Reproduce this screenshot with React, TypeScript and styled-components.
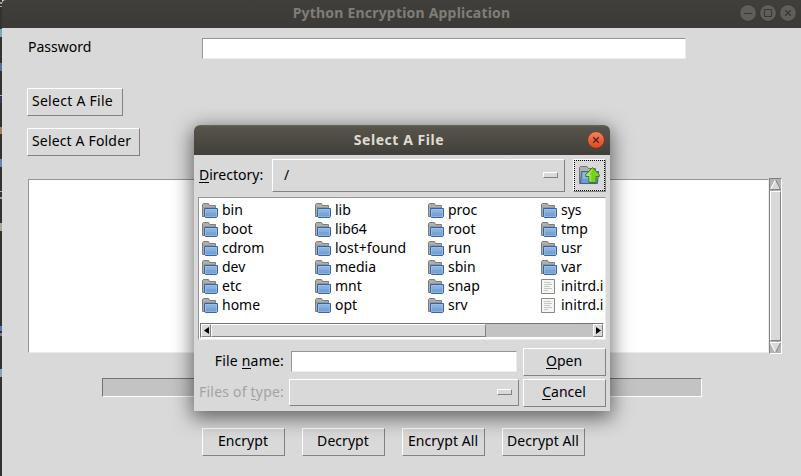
import React from "react";
import styled, { createGlobalStyle } from "styled-components";

const Global = createGlobalStyle`
  * { box-sizing: border-box; }
  html, body { margin: 0; padding: 0; background: #33322f; overflow: hidden; }
  body { font-family: "Noto Sans", sans-serif; font-size: 14px; line-height: 20px; color: #000; }
  button, input { font: inherit; color: inherit; margin: 0; }
`;

const Desktop = styled.div`
  position: relative;
  display: flex;
  width: 801px;
  height: 476px;
  overflow: hidden;
  background: #33322f;
`;

const Backdrop = styled.svg`
  flex: none;
  display: block;
  width: 2px;
  height: 476px;
`;

const Window = styled.main`
  flex: 1;
  display: flex;
  flex-direction: column;
  background: #d9d9d9;
`;

const TitleBar = styled.header<{ $active?: boolean }>`
  flex: none;
  position: relative;
  display: flex;
  align-items: center;
  justify-content: center;
  height: ${(p) => (p.$active ? 30 : 28)}px;
  border-radius: ${(p) => (p.$active ? "6px 6px 0 0" : "4px 0 0 0")};
  background: ${(p) =>
    p.$active ? "linear-gradient(#68655b 0, #57544b 2px, #403f39 100%)" : "linear-gradient(#403f3b, #3b3a36)"};
`;

const Title = styled.h1<{ $active?: boolean }>`
  margin: 0;
  padding: ${(p) => (p.$active ? "0 6px 0 0" : "0 0 2px")};
  font-size: 14px;
  font-weight: 700;
  line-height: 20px;
  white-space: nowrap;
  color: ${(p) => (p.$active ? "#dfdbd2" : "#807d78")};
  letter-spacing: ${(p) => (p.$active ? 0.54 : 0.2)}px;
`;

const WindowControls = styled.div<{ $right: number; $top: number }>`
  position: absolute;
  right: ${(p) => p.$right}px;
  top: ${(p) => p.$top}px;
  display: flex;
  gap: 2px;
  svg { display: block; }
`;

const Body = styled.div`
  display: flex;
  flex-direction: column;
  align-items: flex-start;
  padding: 10px 19px 0 25px;
`;

const PasswordRow = styled.label`
  display: flex;
  height: 50px;
  padding-left: 1px;
`;

const PasswordLabel = styled.span`
  width: 174px;
  line-height: 17px;
`;

const Entry = styled.input<{ $w: number }>`
  width: ${(p) => p.$w}px;
  height: 21px;
  padding: 0 4px;
  border: 1px solid;
  border-color: #959595 #ececec #ececec #959595;
  border-radius: 0;
  background: #fff;
  outline: none;
`;

const Button = styled.button<{ $w: number; $tracking?: number }>`
  flex: none;
  width: ${(p) => p.$w}px;
  height: 28px;
  padding: 0 1px 2px 0;
  border: 1px solid;
  border-color: #fff #828282 #828282 #fff;
  border-radius: 0;
  background: #d9d9d9;
  line-height: 20px;
  letter-spacing: ${(p) => p.$tracking ?? 0}px;
  white-space: nowrap;
  text-align: center;
`;

const SelectButtons = styled.div`
  display: flex;
  flex-direction: column;
  gap: 12px;
  button { text-align: left; padding-left: 4px; }
`;

const OutputRow = styled.div`
  display: flex;
  align-items: center;
  margin: 22px 0 0 1px;
`;

const Output = styled.div`
  width: 741px;
  height: 174px;
  border: 1px solid;
  border-color: #959595 #ececec #ececec #959595;
  background: #fff;
`;

const VScroll = styled.div`
  display: flex;
  flex-direction: column;
  width: 13px;
  height: 176px;
  border: 1px solid;
  border-color: #828282 #fff #fff #828282;
  background: #b3b3b3;
  svg { display: block; flex: none; }
`;

const VThumb = styled.div`
  flex: 1;
  margin: 1px 0;
  border: 1px solid;
  border-color: #fff #828282 #828282 #fff;
  background: #d9d9d9;
`;

const Progress = styled.div`
  width: 600px;
  height: 19px;
  margin: 24px 0 0 75px;
  border: 1px solid;
  border-color: #757575 #fff #fff #757575;
  background: #c3c3c3;
`;

const Actions = styled.div`
  display: flex;
  gap: 17px;
  margin: 31px 0 0 175px;
`;

const Dialog = styled.section`
  position: absolute;
  left: 194px;
  top: 125px;
  width: 416px;
  height: 286px;
  display: flex;
  flex-direction: column;
  border-radius: 6px 6px 0 0;
  background: #d9d9d9;
  box-shadow: 0 5px 20px 2px rgba(0, 0, 0, 0.55);
`;

const DirectoryRow = styled.div`
  display: flex;
  align-items: flex-start;
  height: 42px;
  padding: 4px 4px 0 5px;
`;

const DirectoryLabel = styled.span`
  width: 73px;
  line-height: 31px;
`;

const Key = styled.span<{ $dim?: boolean }>`
  display: inline-block;
  height: 18px;
  line-height: 20px;
  border-bottom: 1px solid ${(p) => (p.$dim ? "#a3a3a3" : "#000")};
`;

const Select = styled.div<{ $w: number; $h: number }>`
  flex: none;
  display: flex;
  align-items: center;
  justify-content: space-between;
  width: ${(p) => p.$w}px;
  height: ${(p) => p.$h}px;
  padding: 0 6px 1px 11px;
  border: 1px solid;
  border-color: #fff #828282 #828282 #fff;
`;

const Indicator = styled.span`
  width: 15px;
  height: 6px;
  margin-left: auto;
  border: 1px solid;
  border-color: #fff #828282 #828282 #fff;
`;

const UpButton = styled.button`
  width: 33px;
  height: 33px;
  margin-left: 8px;
  padding: 0;
  display: grid;
  place-items: center;
  border: 1px solid;
  border-color: #fff #828282 #828282 #fff;
  border-radius: 0;
  background: #d9d9d9;
`;

const FocusRing = styled.span`
  display: grid;
  place-items: center;
  width: 31px;
  height: 31px;
  border: 1px dotted #000;
`;

const FileList = styled.div`
  display: flex;
  flex-direction: column;
  justify-content: space-between;
  width: 408px;
  height: 143px;
  margin-left: 4px;
  padding: 3px 1px 1px;
  border: 1px solid;
  border-color: #959595 #ececec #ececec #959595;
  background: #fff;
`;

const Files = styled.div`
  display: grid;
  grid-auto-flow: column;
  grid-template-rows: repeat(6, 19px);
  grid-template-columns: repeat(3, 113px) 63px;
  padding-left: 2px;
`;

const FileItem = styled.div`
  display: flex;
  align-items: center;
  white-space: nowrap;
  line-height: 19px;
  svg { flex: none; display: block; margin-top: 1px; }
  span { margin: -3px 0 0 4px; }
`;

const HScroll = styled.div`
  display: flex;
  width: 404px;
  height: 15px;
  border: 1px solid;
  border-color: #757575 #fff #fff #757575;
  background: #c3c3c3;
`;

const HArrow = styled.span`
  display: grid;
  place-items: center;
  width: 10px;
  height: 13px;
  border: 1px solid;
  border-color: #fff #828282 #828282 #fff;
  background: #d9d9d9;
`;

const HThumb = styled.span`
  width: 275px;
  height: 13px;
  margin-right: auto;
  border: 1px solid;
  border-color: #fff #828282 #828282 #fff;
  background: #d9d9d9;
`;

const Form = styled.div`
  display: grid;
  grid-template-columns: 90px 229px 1fr;
  grid-template-rows: 28px 28px;
  gap: 3px 0;
  padding: 8px 4px 0 0;
  > button { justify-self: end; }
`;

const FieldLabel = styled.span<{ $dim?: boolean }>`
  text-align: right;
  line-height: 26px;
  letter-spacing: 0.2px;
  white-space: nowrap;
  color: ${(p) => (p.$dim ? "#a3a3a3" : "#000")};
`;

const FieldCell = styled.div<{ $select?: boolean }>`
  padding: ${(p) => (p.$select ? "0 0 0 5px" : "3px 0 0 7px")};
  line-height: 0;
`;

function ControlIcon({ kind, active }: { kind: "min" | "max" | "close"; active?: boolean }) {
  const ink = active ? "#45291e" : "#383733";
  return (
    <svg width="18" height="18" viewBox="0 0 18 18">
      <defs>
        <linearGradient id="orange" x1="0" y1="0" x2="0" y2="1">
          <stop offset="0" stopColor="#f48664" />
          <stop offset=".5" stopColor="#ed6237" />
          <stop offset="1" stopColor="#df4a1b" />
        </linearGradient>
      </defs>
      <circle cx="9" cy="9" r="8.3" fill={active ? "url(#orange)" : "#605e58"} stroke={active ? "#6b3423" : "#34332f"} strokeWidth=".6" />
      {kind === "min" && <path d="M5 9.5h8" stroke={ink} />}
      {kind === "max" && <path d="M5.5 5.5h7v7h-7z" fill="none" stroke={ink} />}
      {kind === "close" && <path d="M6.2 6.2l5.6 5.6M11.8 6.2l-5.6 5.6" stroke={ink} strokeWidth="1.3" />}
    </svg>
  );
}

function FolderIcon() {
  return (
    <svg width="16" height="16" viewBox="0 0 16 16">
      <defs>
        <linearGradient id="blue" x1="0" y1="0" x2="0" y2="1">
          <stop offset="0" stopColor="#92b8e1" />
          <stop offset=".5" stopColor="#83addb" />
          <stop offset="1" stopColor="#6695cb" />
        </linearGradient>
      </defs>
      <path d="M.5 13.5V1.5L1.5.5H6.5L7.5 2.5H13.5V13.5z" fill="#aeaeab" stroke="#7c7c78" />
      <path d="M1.5 4.5h12" stroke="#969692" />
      <path d="M2.5 5.5h13v8l-1 1h-11l-1-1z" fill="url(#blue)" stroke="#3465a4" />
      <path d="M3.5 13.5v-7h11v7z" fill="none" stroke="#a9c6e8" strokeOpacity=".55" />
      <path d="M4 10.5h10" stroke="#6f9dd1" strokeOpacity=".6" />
    </svg>
  );
}

function DocumentIcon() {
  return (
    <svg width="16" height="16" viewBox="0 0 16 16">
      <path d="M.5 .5h13v14H.5z" fill="#f5f5f4" stroke="#888a85" />
      <path d="M3 3.5h7M3 5.5h8M3 7.5h6M3 9.5h8M3 11.5h4" stroke="#c6c6c4" />
    </svg>
  );
}

function UpFolderIcon() {
  return (
    <svg width="21" height="19" viewBox="0 0 21 19">
      <defs>
        <linearGradient id="green" x1="0" y1="0" x2="1" y2="0">
          <stop offset="0" stopColor="#b9e575" />
          <stop offset=".5" stopColor="#73d216" />
          <stop offset="1" stopColor="#8ed13f" />
        </linearGradient>
      </defs>
      <path d="M.5 17.5V1.5L1.5.5H8l1.5 2h7V17.5z" fill="#b1b1ae" stroke="#747470" />
      <path d="M2.5 5.5h17L18.5 17.5h-17z" fill="#6d9bd1" stroke="#3465a4" />
      <path d="M3.5 13V6.5h15V12z" fill="#8eb5df" />
      <path d="M13.5 1.5l6.8 7.2v1.8h-3.3v6h-7v-6H6.7V8.7z" fill="url(#green)" stroke="#3f7f08" />
      <path d="M13.4 3.4L8.6 9.2h2.5v6" fill="none" stroke="#c5ec91" strokeOpacity=".8" />
    </svg>
  );
}

function ScrollArrow({ down }: { down?: boolean }) {
  return down ? (
    <svg width="11" height="11" viewBox="0 0 11 11">
      <path d="M0 1h11L5.5 11z" fill="#d9d9d9" />
      <path d="M0 .5h11M.5 1l5 9.5" fill="none" stroke="#fff" />
      <path d="M10.5 1l-5 9.5" stroke="#828282" />
    </svg>
  ) : (
    <svg width="11" height="11" viewBox="0 0 11 11">
      <path d="M5.5 0L11 10.5H0z" fill="#d9d9d9" />
      <path d="M.5 10.5l5-10" stroke="#fff" />
      <path d="M5.5.5l5 10M0 10.5h11" fill="none" stroke="#828282" />
    </svg>
  );
}

const folders = [
  "bin", "boot", "cdrom", "dev", "etc", "home",
  "lib", "lib64", "lost+found", "media", "mnt", "opt",
  "proc", "root", "run", "sbin", "snap", "srv",
  "sys", "tmp", "usr", "var",
];
const documents = ["initrd.i", "initrd.i"];

const specks: [number, number, string][] = [
  [2, 2, "#b99a7a"], [6, 1, "#aaa"], [29, 8, "#79a9bc"], [63, 8, "#55709b"], [95, 1, "#aaa"], [97, 6, "#303c60"],
  [127, 7, "#a97f51"], [159, 8, "#6685b5"], [191, 1, "#aaa"], [197, 2, "#999"], [223, 8, "#9faf9a"],
  [326, 5, "#5677b2"], [333, 3, "#748494"], [369, 8, "#84a5b4"],
];

export default function App() {
  return (
    <>
      <Global />
      <Desktop>
        <Backdrop viewBox="0 0 2 476" aria-hidden="true">
          {specks.map(([y, h, fill]) => (
            <rect key={y} x="0" y={y} width="2" height={h} fill={fill} />
          ))}
        </Backdrop>
        <Window>
          <TitleBar>
            <Title>Python Encryption Application</Title>
            <WindowControls $right={4} $top={4}>
              <ControlIcon kind="min" />
              <ControlIcon kind="max" />
              <ControlIcon kind="close" />
            </WindowControls>
          </TitleBar>
          <Body>
            <PasswordRow>
              <PasswordLabel>Password</PasswordLabel>
              <Entry type="password" $w={484} />
            </PasswordRow>
            <SelectButtons>
              <Button $w={96} $tracking={0.27}>Select A File</Button>
              <Button $w={113} $tracking={0.16}>Select A Folder</Button>
            </SelectButtons>
            <OutputRow>
              <Output />
              <VScroll>
                <ScrollArrow />
                <VThumb />
                <ScrollArrow down />
              </VScroll>
            </OutputRow>
            <Progress />
            <Actions>
              {["Encrypt", "Decrypt", "Encrypt All", "Decrypt All"].map((t) => (
                <Button key={t} $w={83} $tracking={0.05}>{t}</Button>
              ))}
            </Actions>
          </Body>
        </Window>

        <Dialog>
          <TitleBar $active>
            <Title $active>Select A File</Title>
            <WindowControls $right={5} $top={6}>
              <ControlIcon kind="close" active />
            </WindowControls>
          </TitleBar>
          <DirectoryRow>
            <DirectoryLabel><Key>D</Key>irectory:</DirectoryLabel>
            <Select $w={293} $h={33}>/<Indicator /></Select>
            <UpButton><FocusRing><UpFolderIcon /></FocusRing></UpButton>
          </DirectoryRow>
          <FileList>
            <Files>
              {folders.map((n) => (
                <FileItem key={n}>
                  <FolderIcon />
                  <span>{n}</span>
                </FileItem>
              ))}
              {documents.map((n, i) => (
                <FileItem key={i}>
                  <DocumentIcon />
                  <span>{n}</span>
                </FileItem>
              ))}
            </Files>
            <HScroll>
              <HArrow><svg width="5" height="7" viewBox="0 0 5 7"><path d="M5 0v7L0 3.5z" /></svg></HArrow>
              <HThumb />
              <HArrow><svg width="5" height="7" viewBox="0 0 5 7"><path d="M0 0v7l5-3.5z" /></svg></HArrow>
            </HScroll>
          </FileList>
          <Form>
            <FieldLabel>File <Key>n</Key>ame:</FieldLabel>
            <FieldCell><Entry $w={226} /></FieldCell>
            <Button $w={83}><Key>O</Key>pen</Button>
            <FieldLabel $dim>Files of <Key $dim>t</Key>ype:</FieldLabel>
            <FieldCell $select><Select $w={230} $h={27}><Indicator /></Select></FieldCell>
            <Button $w={83}><Key>C</Key>ancel</Button>
          </Form>
        </Dialog>
      </Desktop>
    </>
  );
}
